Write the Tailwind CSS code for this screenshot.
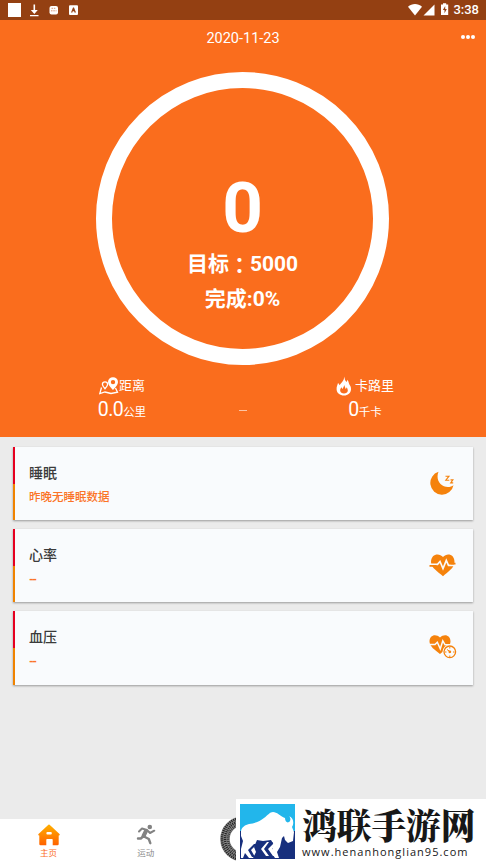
<!DOCTYPE html>
<html lang="zh-CN">
<head>
<meta charset="utf-8">
<title>运动健康</title>
<script src="https://cdn.jsdelivr.net/npm/@tailwindcss/browser@4"></script>
</head>
<body class="w-[486px] h-[864px] overflow-hidden bg-[#ebebeb] font-[Roboto,'Noto_Sans_CJK_SC',sans-serif]">
<div class="relative w-[486px] h-[864px] flex flex-col overflow-hidden">
  <header class="h-5 shrink-0 bg-[#944012] flex items-center justify-between pl-2 pr-[7px] text-white">
    <svg width="72" height="20" viewBox="0 0 72 20" fill="#fff">
      <path d="M0 3h13v14H0z"/>
      <path d="M25.500 4.500h1.600v5.500h2.700L26.300 14l-3.500-4h2.700zM22 15h8.500v1.200H22z"/>
      <rect x="41.500" y="6" width="8.500" height="8.500" rx="2"/>
      <path d="M43.500 8.300h4.500M43 10.800h5.500" stroke="#c97c58" stroke-width=".8" stroke-dasharray="1.500 .8"/>
      <rect x="61" y="5.300" width="9" height="9.700" rx="1"/>
      <path d="M63 12.500l2-5h1l2 5h-1.500l-.4-1.200h-1.400l-.3 1.200z" fill="#944012"/>
    </svg>
    <div class="flex items-center">
      <svg width="45" height="20" viewBox="0 0 45 20" fill="#fff">
        <path d="M0 6.700C4 3.200 10 3.200 14 6.700L7 15.500z"/>
        <path d="M26.500 4.500V15.500H15.500z"/>
        <path d="M35 3.300h3.200v1.200h2V15h-7.200V4.500h2z"/>
        <path d="M37.200 6l-2.300 4h1.600v3.300l2.300-4.200h-1.600z" fill="#944012"/>
      </svg>
      <span class="text-[13px] leading-5 font-medium">3:38</span>
    </div>
  </header>

  <section class="h-[417px] shrink-0 bg-[#fa6d1d] text-white">
    <div class="h-9 grid grid-cols-[1fr_auto_1fr] items-center">
      <span></span>
      <span class="text-[14.5px] leading-5 pt-[2px]">2020-11-23</span>
      <div class="flex justify-end gap-[1px] pr-[11px] -mt-[2px]">
        <i class="size-1 rounded-full bg-white"></i><i class="size-1 rounded-full bg-white"></i><i class="size-1 rounded-full bg-white"></i>
      </div>
    </div>
    <div class="mt-[16px] ml-[96px] size-[293px] rounded-full border-[16px] border-white flex flex-col items-center font-bold">
      <div class="mt-[83px] h-[74px] leading-[74px] text-[71px]">0</div>
      <div class="mt-[2px] h-[35px] leading-[35px] text-[21px] whitespace-nowrap flex"><span>目标</span><span class="font-['Noto_Sans_CJK_TC',sans-serif]" lang="zh-TW">：</span><span>5000</span></div>
      <div class="h-[35px] leading-[35px] text-[21px] whitespace-nowrap">完成:0%</div>
    </div>
    <div class="mt-[9px] grid grid-cols-[244px_1fr]">
      <div class="flex flex-col items-center">
        <div class="h-6 flex items-center text-[13px]">
          <svg width="20" height="18" viewBox="0 0 20 18" fill="none" stroke="#fff">
            <path d="M2.500 10.500L.8 16.500l5.200-1.500 6 1.500 6.500-1.300-2-4.200" stroke-width="1.300"/>
            <path d="M6 4.800c-1.700 0-2.600 1.200-2.600 2.400 0 1.700 2.600 4.500 2.600 4.500s2.600-2.800 2.600-4.500C8.600 6 7.700 4.800 6 4.800z" stroke-width="1.300"/>
            <path fill="#fff" fill-rule="evenodd" stroke="none" d="M14 .2a4.900 4.900 0 0 0-5 4.800c0 3.400 5 8 5 8s5-4.600 5-8A4.900 4.900 0 0 0 14 .2zm0 2.700a2.200 2.200 0 1 1 0 4.400 2.200 2.200 0 0 1 0-4.400z"/>
          </svg>
          <span>距离</span>
        </div>
        <div class="h-6 flex items-baseline leading-6"><span class="text-[19.500px] tracking-[-.6px]">0.0</span><span class="text-[11.500px]">公里</span></div>
      </div>
      <div class="flex flex-col items-center">
        <div class="h-6 flex items-center gap-[3px] text-[13px]">
          <svg width="16" height="20" viewBox="0 0 16 20" fill="#fff">
            <path fill-rule="evenodd" d="M8 .5c1.200 2.500.6 4 2.600 5.500.6-.8.700-1.400.8-2.200 1.400 1.700 1.200 3.200 2 4.700.8 1.400 1.800 2.500 1.600 5C14.700 17 12 19.500 8 19.500S.8 17 .6 13.500C.400 10.500 1.500 9 2 7c.8.700 1.300 1.300 1.500 2.200C5.500 6.500 8.500 4.500 8 .5zM8.300 9c-.2 1.600-1.300 2.500-1.600 4-.6-.4-1-.9-1.200-1.700-.8 1.100-1.500 2.200-1.300 3.500.2 1.800 1.800 2.800 3.800 2.800s3.600-1 3.800-2.800c.1-1.300-.6-2.300-.9-3.600-.6.600-.9 1.200-1 2C9.200 12 8.800 10.700 8.300 9z"/>
          </svg>
          <span>卡路里</span>
        </div>
        <div class="h-6 flex items-baseline leading-6"><span class="text-[19.500px] tracking-[-.6px]">0</span><span class="text-[11.500px]">千卡</span></div>
      </div>
    </div>
    <div class="-mt-3 ml-[239px] w-2 h-px bg-white/60"></div>
  </section>

  <main class="flex-1 pt-[10px] px-[13px] flex flex-col gap-[9px]">
    <article class="h-[73.200px] shrink-0 flex bg-[#f9fbfd] shadow-[0_1px_2px_rgba(0,0,0,.35)]">
      <div class="w-[2px] flex flex-col"><i class="flex-1 bg-[#e60020]"></i><i class="flex-1 bg-[#f08300]"></i></div>
      <div class="flex-1 pl-[14px] pt-[14px] font-medium">
        <h2 class="text-[14px] leading-6 text-[#3b3b3b]">睡眠</h2>
        <p class="text-[11.500px] leading-6 text-[#fb7427]">昨晚无睡眠数据</p>
      </div>
      <svg class="mt-[24px] mr-[17px]" width="26" height="26" viewBox="0 0 26 26" fill="#f5820c">
        <path d="M8.500.8A11.700 11.700 0 1 0 23.500 14.200C20 17 14 16.500 10.500 13 7.300 9.500 6.800 4.800 8.500.8z"/>
        <path d="M15.500 5.200h3.500l-3.200 4h3.500M20.500 8.900h2.400l-2.200 3h2.500" fill="none" stroke="#f5820c" stroke-width="1.100"/>
      </svg>
    </article>
    <article class="h-[73.200px] shrink-0 flex bg-[#f9fbfd] shadow-[0_1px_2px_rgba(0,0,0,.35)]">
      <div class="w-[2px] flex flex-col"><i class="flex-1 bg-[#e60020]"></i><i class="flex-1 bg-[#f08300]"></i></div>
      <div class="flex-1 pl-[14px] pt-[14px] font-medium">
        <h2 class="text-[14px] leading-6 text-[#3b3b3b]">心率</h2>
        <p class="pt-px text-[12px] leading-6 text-[#fb7427] font-bold tracking-[-1.500px]">--</p>
      </div>
      <svg class="mt-[24px] mr-[16px]" width="28" height="26" viewBox="0 0 28 26">
        <path d="M14 4C10-.5 2 1 2 9c0 6 7 9.500 12 14.300C19 18.500 25.500 15 25.500 9 25.500 1 18-.5 14 4z" fill="#f5820c"/>
        <path d="M0 11.300h8.500l2.500-2.800 3 7 3.300-8 2.200 4.800H28" fill="none" stroke="#f9fbfd" stroke-width="1.700"/>
        <path d="M.5 12.900h7M21.500 10.700h5" stroke="#f5820c" stroke-width="1.700"/>
      </svg>
    </article>
    <article class="h-[73.200px] shrink-0 flex bg-[#f9fbfd] shadow-[0_1px_2px_rgba(0,0,0,.35)]">
      <div class="w-[2px] flex flex-col"><i class="flex-1 bg-[#e60020]"></i><i class="flex-1 bg-[#f08300]"></i></div>
      <div class="flex-1 pl-[14px] pt-[14px] font-medium">
        <h2 class="text-[14px] leading-6 text-[#3b3b3b]">血压</h2>
        <p class="pt-px text-[12px] leading-6 text-[#fb7427] font-bold tracking-[-1.500px]">--</p>
      </div>
      <svg class="mt-[24px] mr-[16px]" width="28" height="24" viewBox="0 0 28 24">
        <path d="M11 2.500C7-1.500.5-.2.500 6.500c0 5 5.500 8.500 10.500 12.500C16 15 21.500 11.500 21.500 6.500 21.500-.2 15-1.500 11 2.500z" fill="#f5820c"/>
        <path d="M0 9.500h6l2.300-2.200 3 6.500 2.500-8 2.300 4H23" fill="none" stroke="#f9fbfd" stroke-width="1.500"/>
        <circle cx="20.800" cy="16.800" r="7.300" fill="#f9fbfd"/>
        <circle cx="20.800" cy="16.800" r="5.800" fill="#f9fbfd" stroke="#f5820c" stroke-width="1.300"/>
        <path d="M18 14.500l3.500 2.500M20.800 12v1.500M20.800 20.500V22M24 17h1.500M16 17h1.500" stroke="#f5820c"/>
        <circle cx="20.800" cy="16.800" r="1.400" fill="#f5820c"/>
      </svg>
    </article>
  </main>

  <nav class="h-[45px] shrink-0 bg-white grid grid-cols-5 text-[8.500px] leading-3">
    <div class="flex flex-col items-center pt-[5px] text-[#fb6d1c]">
      <svg width="22" height="22" viewBox="0 0 22 22">
        <defs><linearGradient id="home" x2="0" y2="1"><stop stop-color="#ffb000"/><stop offset="1" stop-color="#ff6200"/></linearGradient></defs>
        <path d="M10.400.8q.6-.5 1.200 0L21.500 10c.5.5.2 1.400-.5 1.400h-.3V20q0 1.200-1.200 1.200h-4.800v-5.500q0-.7-.7-.7h-5q-.7 0-.7.700v5.500H2.500Q1.300 21.200 1.300 20v-8.600H1c-.7 0-1-.9-.5-1.400z" fill="url(#home)"/>
        <rect x="8.400" y="8" width="5.400" height="2.600" rx="1" fill="#fff"/>
      </svg>
      <span class="mt-px">主页</span>
    </div>
    <div class="flex flex-col items-center pt-[5px] text-[#8b8b8b]">
      <svg width="20" height="22" viewBox="0 0 20 22" fill="none" stroke="#828282" stroke-linecap="round" stroke-linejoin="round">
        <circle cx="13.800" cy="3" r="2.300" fill="#828282" stroke="none"/>
        <path d="M3 7.500L6 4.500l5 1.500L14 9l4.300-2.300" stroke-width="2"/>
        <path d="M10 7L7.500 12" stroke-width="4"/>
        <path d="M8 12.500l4.800 2.500 1.500 4.200" stroke-width="2.400"/>
        <path d="M6.500 13l-1.700 1.500H2" stroke-width="2.400"/>
      </svg>
      <span class="mt-px">运动</span>
    </div>
    <div class="flex justify-center">
      <svg class="shrink-0 -mt-[3px]" width="46" height="46" viewBox="0 0 46 46" fill="none">
        <circle cx="23" cy="23" r="18" stroke="#8a8a8a" stroke-width="9.500"/>
        <circle cx="23" cy="23" r="21" stroke="#222" stroke-width="2.500" stroke-dasharray="1.200 .9"/>
        <circle cx="23" cy="23" r="18" stroke="#222" stroke-width="2.500" stroke-dasharray="1.100 .9" stroke-dashoffset="1"/>
        <circle cx="23" cy="23" r="15" stroke="#333" stroke-width="2.500" stroke-dasharray="1 .9"/>
      </svg>
    </div>
  </nav>

  <aside class="absolute right-0 bottom-0 w-[250px] h-[65px] bg-white flex pl-[4px] pt-[5px] gap-[7px] text-[#171717]">
    <svg class="shrink-0" width="55" height="55" viewBox="0 0 55 55">
      <path d="M0 0h55v27H0z" fill="#22b6eb"/><path d="M0 27h55v28H0z" fill="#172f7d"/>
      <path d="M1 27c1-4 4-6 8-7 6-1 10-2 15-6 4-3 6-6 9-6 4 0 7 4 12 6 0 4 3 6 5 3 1-2 0-4-1-5 5 2 5 8 3 11l2 5-1 9-5 2-3-3-1-4-2 2-2 9-3 5 2 6h-4l-4-6 3-7-3-5-8 1-6-1-3 7 2 5-3 6H9l-4-5-2 5H1v-9l2-8-2-5z" fill="#fff"/>
      <path d="M17 40h-3l-6 6 4 7h3l-4-7zM33 38h-3l-7 7 5 7h3l-4-7z" fill="#172f7d"/>
      <path d="M29 38h-2l-6 7 5 7h3l-5-7zM37 39h-3l-6 6 5 7h4l-5-7z" fill="#fff"/>
    </svg>
    <div class="w-[180px] whitespace-nowrap">
      <div class="h-[41px] leading-[41px] text-[34.700px] font-black font-['Noto_Serif_CJK_SC','Noto_Sans_CJK_SC',serif]">鸿联手游网</div>
      <div class="h-[14px] leading-[14px] text-[11px] tracking-[1.020px] font-medium font-['Open_Sans',sans-serif]">www.henanhonglian95.com</div>
    </div>
  </aside>
</div>
</body>
</html>
